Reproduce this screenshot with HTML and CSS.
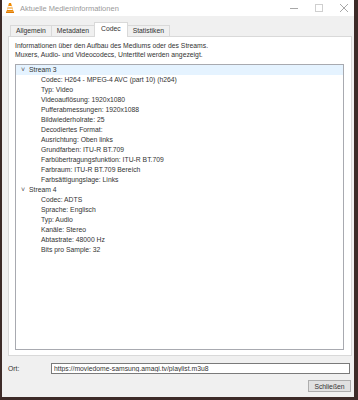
FILE: index.html
```html
<!DOCTYPE html>
<html lang="de">
<head>
    <meta charset="UTF-8">
    <title>Aktuelle Medieninformationen</title>
    <link rel="stylesheet" href="styles.css">
</head>
<body>
    <div class="window">
        <header class="titlebar">
            <svg class="app-icon" width="8" height="10" viewBox="0 0 8 10">
                <path d="M3 0 L5 0 L7.5 8.5 L0.5 8.5 Z" fill="#f08a00"/>
                <path d="M2.3 3 L5.7 3 L6.1 4.4 L1.9 4.4 Z" fill="#fff"/>
                <path d="M1.6 5.6 L6.4 5.6 L6.8 7 L1.2 7 Z" fill="#fff"/>
                <rect x="0" y="8.5" width="8" height="1.5" fill="#e07a00"/>
            </svg>
            <span class="title">Aktuelle Medieninformationen</span>
            <div class="controls">
                <svg width="8" height="8" viewBox="0 0 8 8"><path d="M0 4.5 H8" stroke="#a8a8a8"/></svg>
                <svg width="8" height="8" viewBox="0 0 8 8"><rect x="0.5" y="0.5" width="7" height="7" fill="none" stroke="#cfcfcf"/></svg>
                <svg width="8" height="8" viewBox="0 0 8 8"><path d="M0 0 L8 8 M8 0 L0 8" stroke="#a8a8a8"/></svg>
            </div>
        </header>

        <nav class="tabs">
            <span class="tab">Allgemein</span>
            <span class="tab">Metadaten</span>
            <span class="tab active">Codec</span>
            <span class="tab">Statistiken</span>
        </nav>

        <section class="panel">
            <p class="desc">Informationen über den Aufbau des Mediums oder des Streams.<br>Muxers, Audio- und Videocodecs, Untertitel werden angezeigt.</p>
            <div class="tree">
                <div class="row stream selected"><span class="chev">&#709;</span>Stream 3</div>
                <div class="row">Codec: H264 - MPEG-4 AVC (part 10) (h264)</div>
                <div class="row">Typ: Video</div>
                <div class="row">Videoauflösung: 1920x1080</div>
                <div class="row">Pufferabmessungen: 1920x1088</div>
                <div class="row">Bildwiederholrate: 25</div>
                <div class="row">Decodiertes Format:</div>
                <div class="row">Ausrichtung: Oben links</div>
                <div class="row">Grundfarben: ITU-R BT.709</div>
                <div class="row">Farbübertragungsfunktion: ITU-R BT.709</div>
                <div class="row">Farbraum: ITU-R BT.709 Bereich</div>
                <div class="row">Farbsättigungslage: Links</div>
                <div class="row stream"><span class="chev">&#709;</span>Stream 4</div>
                <div class="row">Codec: ADTS</div>
                <div class="row">Sprache: Englisch</div>
                <div class="row">Typ: Audio</div>
                <div class="row">Kanäle: Stereo</div>
                <div class="row">Abtastrate: 48000 Hz</div>
                <div class="row">Bits pro Sample: 32</div>
            </div>
        </section>

        <div class="location">
            <label for="url">Ort:</label>
            <input id="url" type="text" value="https://moviedome-samsung.amagi.tv/playlist.m3u8" readonly>
        </div>

        <footer class="actions">
            <button>Schließen</button>
        </footer>
    </div>
</body>
</html>
```

FILE: styles.css
```css
/* Fenster im Stil eines Windows-10-Dialogs */
* {
    margin: 0;
    padding: 0;
    box-sizing: border-box;
}

body {
    background-color: #3d2b28;
    font-family: 'Liberation Sans', Arial, sans-serif;
    font-size: 6.8px;
    color: #333;
    height: 400px;
    overflow: hidden;
}

.window {
    margin-left: 2px;
    width: 352px;
    height: 397px;
    background-color: #f0f0f0;
    display: flex;
    flex-direction: column;
}

/* Titelleiste */
.titlebar {
    height: 16px;
    background-color: #fff;
    display: flex;
    align-items: center;
    padding-left: 4px;
}

.app-icon {
    margin-right: 6px;
}

.title {
    color: #9a9a9a;
    font-size: 7.5px;
}

.controls {
    margin-left: auto;
    display: flex;
    gap: 17px;
    padding-right: 6px;
}

/* Reiter */
.tabs {
    display: flex;
    align-items: flex-end;
    height: 20px;
    padding-left: 8px;
}

.tab {
    height: 11px;
    line-height: 10px;
    padding: 0 5px;
    border: 1px solid #d9d9d9;
    border-bottom: none;
    margin-right: -1px;
    background-color: #f0f0f0;
}

.tab.active {
    height: 15px;
    line-height: 12px;
    padding: 0 6px;
    background-color: #fff;
    position: relative;
    z-index: 1;
    margin-bottom: -1px;
}

/* Inhaltsbereich */
.panel {
    margin: 0 2px 0 6px;
    height: 320px;
    background-color: #fff;
    border: 1px solid #d9d9d9;
    padding: 4px 7px 5px 6px;
    display: flex;
    flex-direction: column;
}

.desc {
    line-height: 9px;
    margin-bottom: 5px;
}

.tree {
    flex: 1;
    border: 1px solid #a8aab0;
}

.row {
    height: 10px;
    line-height: 10px;
    padding-left: 25px;
    white-space: nowrap;
}

.row.stream {
    padding-left: 5px;
}

.row.selected {
    background-color: #e5f3ff;
}

.chev {
    display: inline-block;
    width: 8px;
    color: #555;
    font-size: 7px;
}

/* Ort */
.location {
    display: flex;
    align-items: center;
    margin-top: 7px;
    padding-left: 6px;
}

.location label {
    width: 43px;
}

.location input {
    width: 299px;
    height: 11px;
    border: 1px solid #7a7a7a;
    font-family: inherit;
    font-size: 6.8px;
    padding-left: 2px;
    color: #333;
    outline: none;
}

.actions {
    display: flex;
    justify-content: flex-end;
    padding-right: 3px;
    margin-top: 6px;
}

.actions button {
    width: 43px;
    height: 12px;
    background-color: #e1e1e1;
    border: 1px solid #adadad;
    font-family: inherit;
    font-size: 6.8px;
    color: #333;
}
```
